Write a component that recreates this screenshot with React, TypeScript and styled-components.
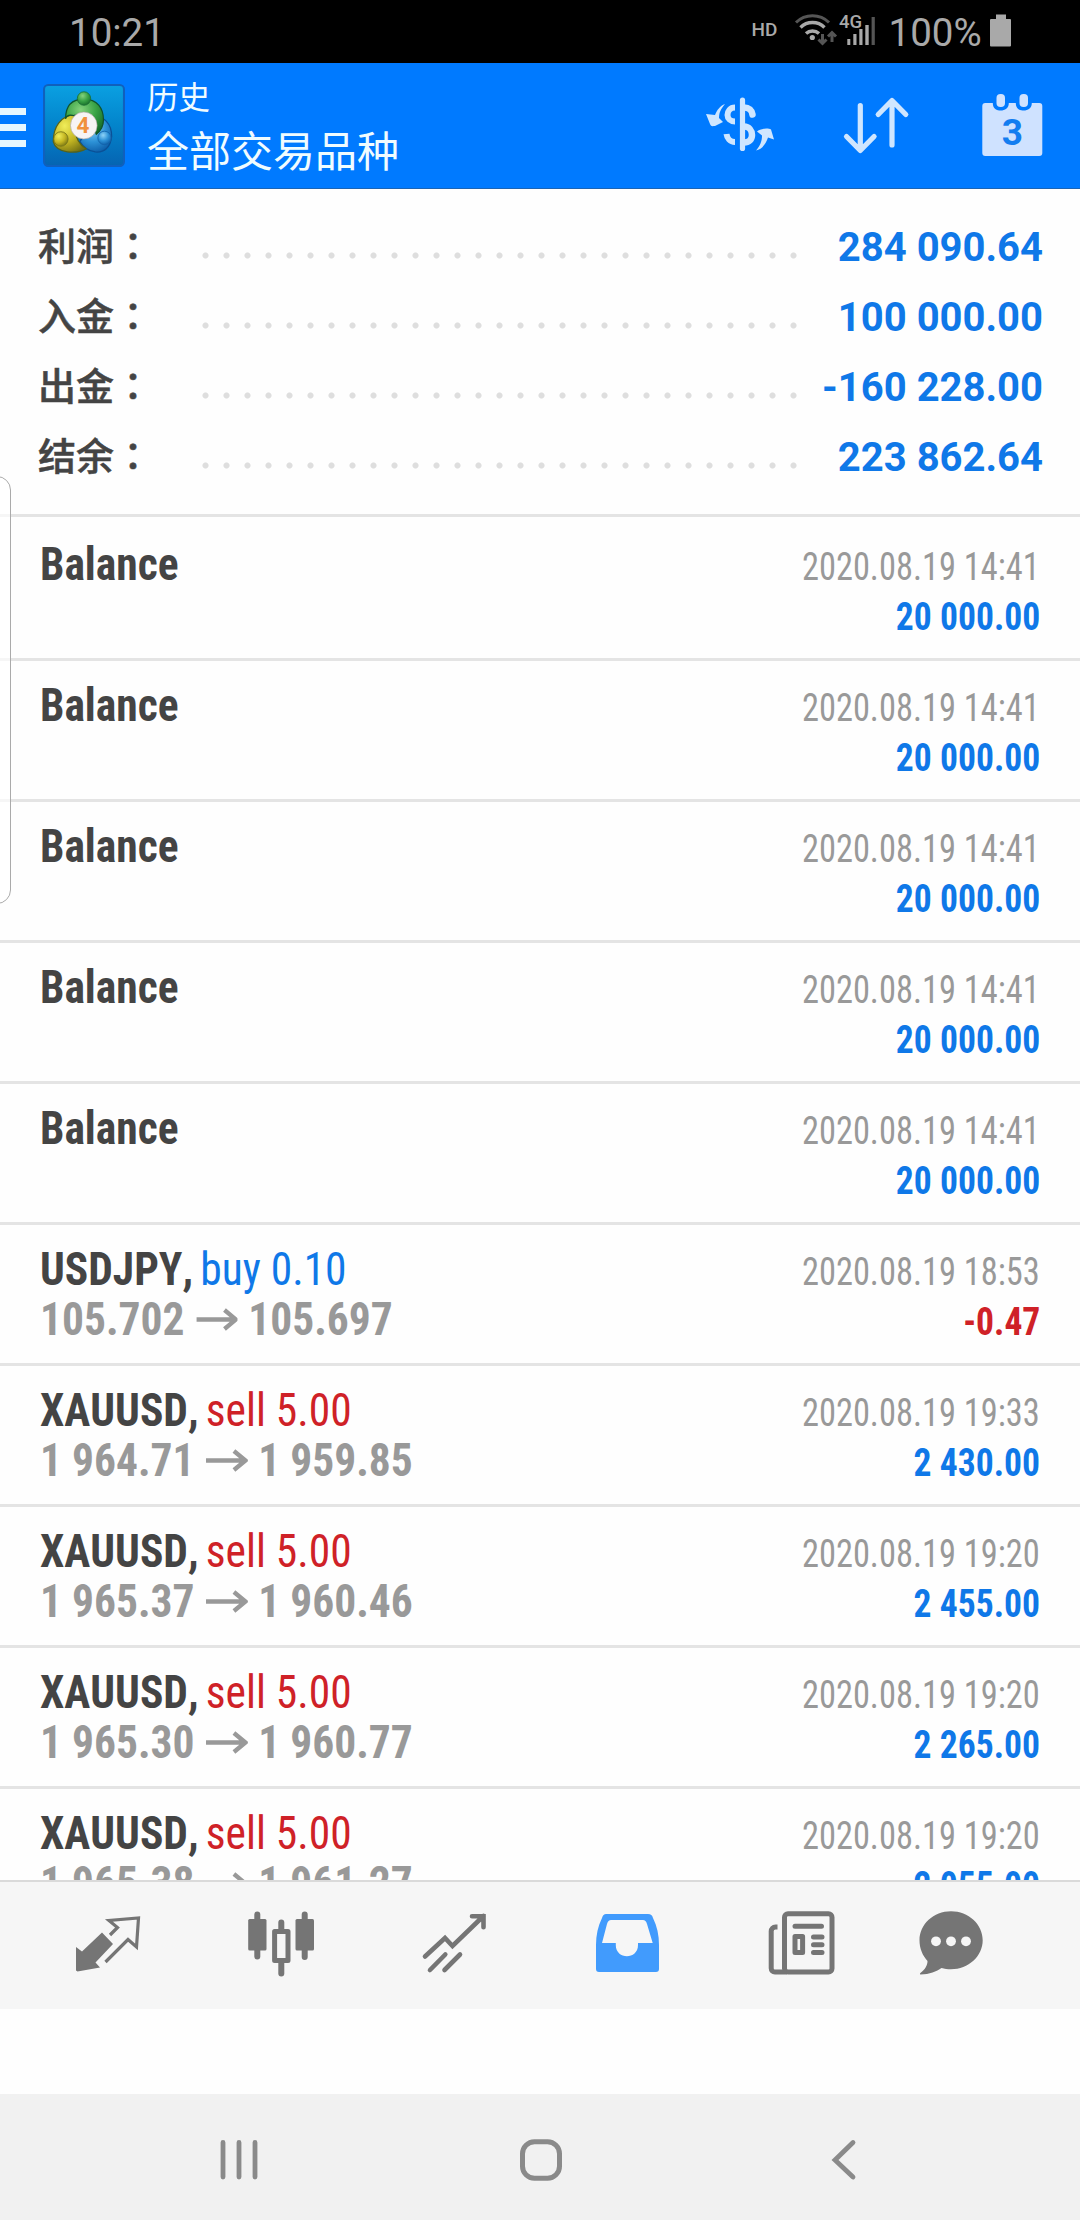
import React from "react";
import styled, { createGlobalStyle } from "styled-components";

const GlobalStyle = createGlobalStyle`
  * { box-sizing: border-box; }
  body { margin: 0; background: #fff; }
`;

const colors = {
  blue: "#0f78e8",
  red: "#cf2127",
  dark: "#444",
  gray: "#999",
  icon: "#757575",
};

const Screen = styled.div`
  position: relative;
  display: flex;
  flex-direction: column;
  width: 1080px;
  height: 2220px;
  overflow: hidden;
  background: #fefefe;
  font-family: Roboto, "Noto Sans CJK SC", sans-serif;
`;

/* ---------- status bar ---------- */

const StatusBar = styled.div`
  display: flex;
  justify-content: space-between;
  height: 63px;
  padding: 0 69px 0 69px;
  background: #000;
  color: #a9a9a9;
`;

const StatusText = styled.span<{ $width?: number }>`
  width: ${(p) => (p.$width ? `${p.$width}px` : "auto")};
  font-size: 38.5px;
  line-height: 45px;
  padding-top: 10px;
`;

const StatusRight = styled.div`
  display: flex;
`;

const HdBadge = styled.span`
  width: 42.5px;
  padding-top: 18px;
  font-size: 19px;
  font-weight: 500;
  line-height: 24px;
`;

const Network = styled.div`
  display: flex;
  position: relative;
  width: 94.5px;
`;

const NetworkLabel = styled.span`
  position: absolute;
  left: 45px;
  top: 11px;
  font-size: 18.5px;
  font-weight: 500;
  line-height: 22px;
`;

/* ---------- header ---------- */

const Header = styled.header`
  display: flex;
  height: 126px;
  background: #007aff;
  border-bottom: 1px solid #1b64b4;
  color: #f0fcff;
`;

const MenuButton = styled.div`
  display: flex;
  flex-direction: column;
  gap: 9px;
  width: 43px;
  padding-top: 45px;
`;

const MenuLine = styled.span`
  width: 26px;
  height: 7px;
  background: #e6f7ff;
`;

const LogoBox = styled.div`
  width: 104px;
  padding-top: 21px;
`;

const Titles = styled.div`
  flex: 1;
  display: flex;
  flex-direction: column;
  padding-top: 16px;
`;

const Caption = styled.span`
  font-size: 31.5px;
  line-height: 40px;
`;

const Title = styled.span`
  font-size: 42px;
  line-height: 68px;
`;

const Actions = styled.div`
  display: flex;
  padding: 27px 35px 0 0;
  gap: 67px;
`;

/* ---------- summary ---------- */

const Summary = styled.section`
  height: 328px;
  padding: 24px 37px 0 38px;
  border-bottom: 3px solid #e4e4e4;
`;

const SummaryRow = styled.div`
  display: flex;
  height: 70px;
  line-height: 70px;
`;

const SummaryLabel = styled.span`
  width: 157px;
  margin-top: -4px;
  font-family: "Noto Sans CJK SC", sans-serif;
  font-size: 38px;
  font-weight: 500;
  color: ${colors.dark};
  -webkit-text-stroke: 0.5px ${colors.dark};
`;

const LabelColon = styled.span`
  font-family: "Noto Sans CJK TC", sans-serif;
`;

const Dots = styled.span`
  width: 609px;
  height: 7px;
  margin-top: 39px;
  background: radial-gradient(circle at center, #dedede 2.6px, transparent 3.5px) 0 0 / 21px 7px repeat-x;
`;

const SummaryValue = styled.span`
  flex: 1;
  text-align: right;
  white-space: nowrap;
  font-size: 40px;
  font-weight: 700;
  color: ${colors.blue};
`;

/* ---------- deals ---------- */

const DealList = styled.section`
  height: 1363px;
  padding-top: 3px;
  overflow: hidden;
`;

const Deal = styled.article`
  display: flex;
  justify-content: space-between;
  height: 141px;
  padding: 0 40px;
  border-bottom: 3px solid #e4e4e4;
  font-stretch: 75%;
  font-kerning: none;
  font-family: "Roboto Condensed", Roboto, sans-serif;
  line-height: 50px;
  white-space: nowrap;
`;

const DealMain = styled.div`
  padding-top: 19px;
  font-size: 46px;
  transform: scaleX(0.945);
  transform-origin: left;
`;

const DealSide = styled.div`
  display: flex;
  flex-direction: column;
  align-items: flex-end;
  padding-top: 22px;
  font-size: 38px;
`;

const Line = styled.div``;

const Symbol = styled.span`
  font-weight: 700;
  color: ${colors.dark};
`;

const Side = styled.span<{ $sell?: boolean }>`
  margin-left: -3px;
  color: ${(p) => (p.$sell ? colors.red : colors.blue)};
`;

const Prices = styled.div`
  display: flex;
  align-items: center;
  gap: 11px;
  font-weight: 700;
  color: ${colors.gray};
`;

const Time = styled.span`
  color: ${colors.gray};
  transform: scaleX(0.905);
  transform-origin: right;
`;

const Profit = styled.span<{ $loss?: boolean }>`
  font-weight: 700;
  color: ${(p) => (p.$loss ? colors.red : colors.blue)};
  transform: scaleX(0.937);
  transform-origin: right;
`;

/* ---------- bottom ---------- */

const TabBar = styled.nav`
  display: flex;
  height: 129px;
  padding-left: 20px;
  background: #f6f6f6;
  border-top: 2px solid #dadada;
`;

const Tab = styled.div<{ $width: number }>`
  display: flex;
  justify-content: center;
  width: ${(p) => p.$width}px;
  padding-top: 23px;
`;

const Gap = styled.div`
  height: 85px;
`;

const SystemNav = styled.nav`
  display: flex;
  justify-content: space-around;
  height: 126px;
  padding: 36px 86px 0 88px;
  background: #f1f1f1;
`;

const EdgeHandle = styled.div`
  position: absolute;
  left: -20px;
  top: 476px;
  width: 31px;
  height: 428px;
  border: 1.5px solid #aaa;
  border-radius: 14px;
  background: rgba(255, 255, 255, 0.65);
`;

type IconProps = { box: [number, number, number, number]; children: React.ReactNode };
const Icon = ({ box, children }: IconProps) => (
  <svg width={box[2]} height={box[3]} viewBox={box.join(" ")} fill="none">
    {children}
  </svg>
);

const NetworkIcon = () => (
  <Icon box={[794, 0, 91, 63]}>
    <g strokeLinecap="butt" strokeWidth="3.4">
      <path d="M796 22.5a23.5 23.5 0 0 1 33 0" stroke="#555" strokeWidth="3" />
      <path d="M800.5 27.500a17 17 0 0 1 24 0" stroke="#a9a9a9" />
      <path d="M806 33.500a9.500 9.500 0 0 1 13 0" stroke="#a9a9a9" />
    </g>
    <circle cx="812.300" cy="37.500" r="2.600" fill="#a9a9a9" />
    <path d="M822.500 34v9M818.500 39.500l4 4 4-4M832 42v-9M828 36.500l4-4 4 4" stroke="#555" strokeWidth="3" />
    <g fill="#a9a9a9">
      <rect x="847.300" y="39" width="3" height="6" />
      <rect x="853.300" y="34" width="3.200" height="11" />
      <rect x="859.300" y="29" width="3.200" height="16" />
      <rect x="865.300" y="25" width="3.400" height="20" />
    </g>
    <rect x="871.600" y="17" width="3.200" height="28" fill="#555" />
  </Icon>
);

const BatteryIcon = () => (
  <Icon box={[990, 0, 21, 63]}>
    <path d="M996 14.500h10v4.500h4a1 1 0 0 1 1 1v25.500a1 1 0 0 1-1 1h-19a1 1 0 0 1-1-1v-25.500a1 1 0 0 1 1-1h5z" fill="#a9a9a9" />
  </Icon>
);

const Logo = () => (
  <svg width="82" height="83" viewBox="44 85.500 80 80" preserveAspectRatio="none">
    <defs>
      <linearGradient id="tile" x1="0" y1="0" x2="0" y2="1">
        <stop offset="0" stopColor="#0aa0e2" />
        <stop offset="0.5" stopColor="#0384cb" />
        <stop offset="1" stopColor="#0564b2" />
      </linearGradient>
      <radialGradient id="green" cx="0.4" cy="0.3" r="0.8">
        <stop offset="0" stopColor="#85d27c" />
        <stop offset="0.5" stopColor="#39a345" />
        <stop offset="1" stopColor="#126425" />
      </radialGradient>
      <radialGradient id="gold" cx="0.35" cy="0.3" r="0.8">
        <stop offset="0" stopColor="#f0ed59" />
        <stop offset="0.55" stopColor="#c3b522" />
        <stop offset="1" stopColor="#706e12" />
      </radialGradient>
      <radialGradient id="azure" cx="0.4" cy="0.3" r="0.8">
        <stop offset="0" stopColor="#8ed2f7" />
        <stop offset="0.5" stopColor="#2d92d7" />
        <stop offset="1" stopColor="#0754a0" />
      </radialGradient>
    </defs>
    <rect x="45" y="86.500" width="78" height="78" rx="4" fill="url(#tile)" stroke="#1060bd" strokeWidth="2" />
    <path d="M94 119c9-4 17 5 17 17-1 10-7 16-16 15-7-1-12-5-15-10z" fill="url(#azure)" stroke="#0b5096" strokeWidth="1.200" />
    <path d="M75 115c-14 1-21 12-21 26 3 12 23 12 32 7-6-4-10-10-10-17z" fill="url(#gold)" stroke="#55621b" strokeWidth="1.200" />
    <path d="M66 119c0-11 5-19 18-19s19 9 19 20c0 6-3 11-7 14l-7-19H77l-3 1c-4-1-7 0-8 3z" fill="url(#green)" stroke="#10532c" strokeWidth="1.200" />
    <circle cx="84" cy="99.500" r="6.500" fill="url(#green)" stroke="#196e34" strokeWidth="0.800" />
    <circle cx="61.500" cy="138.500" r="7" fill="url(#gold)" stroke="#75751a" strokeWidth="0.800" />
    <circle cx="104" cy="137.500" r="6.500" fill="url(#azure)" stroke="#1262aa" strokeWidth="0.800" />
    <circle cx="83.800" cy="125.500" r="13" fill="#f7f4f4" stroke="#a9a39c" strokeWidth="0.600" />
    <text x="83" y="133" textAnchor="middle" fontSize="22" fontWeight="700" fontFamily="Roboto, sans-serif" fill="#f0913c">4</text>
  </svg>
);

const CurrencyIcon = () => (
  <Icon box={[704, 90, 70, 70]}>
    <g fill="#cfe6ff">
      <path d="M725 104c-5 2-8 6-10 11l-9-1 4 10c1 3 3 2 5 2l8-4-4-4c0-6 2-9 6-14z" />
      <path d="M756 150.500c6-1 10-7 12-13l6 2-3-10c-3-2-11-1-14 2l5 4c0 6-2 10-6 15z" />
    </g>
    <g stroke="#cfe6ff">
      <path d="M742.500 100v48.500" strokeWidth="5.200" strokeLinecap="round" />
      <path d="M735 107.500c-5 0-7.500 4-7.500 7.500s3 6.500 7.500 6.500" strokeWidth="6" />
      <path d="M744 107.500c5 0 8 3 8.500 7" strokeWidth="6.500" strokeLinecap="round" />
      <path d="M744 126.500c5 0 8 4 8 8.500s-3 7.500-8 7.500" strokeWidth="6.500" />
      <path d="M726.500 134c.5 4 3.500 8 8.500 8" strokeWidth="6" />
    </g>
  </Icon>
);

const SortIcon = () => (
  <Icon box={[841, 90, 71, 70]}>
    <path d="M860.300 105.500v43.500M846.500 136.500l13.800 14 13.800-14M892 145v-43.500M878.200 114.500l13.800-14 13.800 14" stroke="#cfe6ff" strokeWidth="5.200" strokeLinecap="round" strokeLinejoin="round" />
  </Icon>
);

const CalendarIcon = () => (
  <svg width="66" height="70" viewBox="979 90 66 70">
    <path d="M985 103.500h7.500c0 6 4 7.500 8 7.500s8-2 8-7.500h7c0 6 4 7.500 8 7.500s8-2 8-7.500h7.500a3 3 0 0 1 3 3v47a3 3 0 0 1-3 3h-54a3 3 0 0 1-3-3v-47a3 3 0 0 1 3-3z" fill="#cfe2ff" transform="translate(.3 -.5)" />
    <rect x="996.500" y="94" width="8.500" height="13" rx="4" fill="#cfe2ff" />
    <rect x="1019.500" y="94" width="8.500" height="13" rx="4" fill="#cfe2ff" />
    <text x="1012.300" y="144.500" textAnchor="middle" fontSize="37" fontWeight="700" fontFamily="Roboto, sans-serif" fill="#137df0">3</text>
  </svg>
);

const ArrowIcon = () => (
  <svg width="45.500" height="27" viewBox="194 1304 43 27" preserveAspectRatio="none" fill="none">
    <path d="M195.600 1317.500h39M223.500 1308l11.500 9.500-11.500 9.500" stroke={colors.gray} strokeWidth="4.300" />
  </svg>
);

const QuotesIcon = () => (
  <Icon box={[72, 1905, 70, 75]}>
    <path d="M76 1947l6 4.500 20-19 11 11.500-17.500 18.500 4.500 5-22.500 4-1.500-1z" fill={colors.icon} />
    <path d="M110 1935l7.500-7.500-8.500-7 29.500-2.500-2 29-8.500-7.500-22.500 22.500" stroke={colors.icon} strokeWidth="3.200" />
  </Icon>
);

const ChartIcon = () => (
  <Icon box={[245, 1905, 70, 75]}>
    <path d="M256.300 1914.500v42M280.300 1922.500v9M280.300 1962v11.500M303.700 1914.500v42.500" stroke={colors.icon} strokeWidth="6" strokeLinecap="round" />
    <rect x="247.200" y="1919" width="18.300" height="31.500" rx="1.500" fill={colors.icon} />
    <rect x="294.500" y="1919" width="18.500" height="31.500" rx="1.500" fill={colors.icon} />
    <rect x="273.600" y="1931.500" width="13.400" height="29" fill="#f6f6f6" stroke={colors.icon} strokeWidth="5" strokeLinejoin="round" />
  </Icon>
);

const TradeIcon = () => (
  <Icon box={[418, 1905, 70, 75]}>
    <g stroke={colors.icon} strokeWidth="4.600" strokeLinecap="round">
      <path d="M424 1956.500l20-18.500 7.500 8 31-30M471 1916.300h11.500v11M444.300 1954.500l-15.300 15.500M459 1954.500l-15.500 15.500" />
    </g>
  </Icon>
);

const HistoryIcon = () => (
  <Icon box={[592, 1905, 70, 75]}>
    <path fillRule="evenodd" fill="#419bfd" d="M606 1914h42c3 0 4 1 5 4 4 8 6 17 6 27v24a3 3 0 0 1-3 3h-57a3 3 0 0 1-3-3v-24c0-10 2-19 6-27 1-3 2-4 4-4zM611 1920c-2 0-3 1-4 4l-5 19h13.800v2c0 15 22.200 15 22.200 0v-2h14.700l-5.700-19c-1-3-2-4-4-4z" />
  </Icon>
);

const NewsIcon = () => (
  <Icon box={[766, 1905, 70, 75]}>
    <g stroke={colors.icon} strokeWidth="5">
      <rect x="784.500" y="1913.800" width="47.500" height="58.200" rx="3.500" />
      <path d="M777.500 1927h-2a4.300 4.300 0 0 0-4.300 4.300v37a3.700 3.700 0 0 0 3.700 3.700h12" />
      <path d="M795 1926.300h26.500M813.500 1937h8.500M813.500 1944.700h8.500M813.500 1952.500h8.500" strokeLinecap="round" />
      <rect x="795" y="1936.500" width="7.600" height="16" strokeLinejoin="round" />
    </g>
  </Icon>
);

const ChatIcon = () => (
  <Icon box={[916, 1905, 70, 75]}>
    <path d="M951 1911.300c17.500 0 31.700 13 31.700 29s-14.200 29-31.700 29c-3.500 0-6.500-.5-9.500-1.300-5 3.500-12 6.500-21 6.500-1-.3-.5-1.500.5-2 4-3 6.500-7 6.500-11.500-5-5.500-8-12.500-8-20.700 0-16 14-29 31.500-29z" fill={colors.icon} />
    <g fill="#f6f6f6">
      <circle cx="936" cy="1941.300" r="4.900" />
      <circle cx="951" cy="1941.300" r="4.900" />
      <circle cx="966" cy="1941.300" r="4.900" />
    </g>
  </Icon>
);

type Trade = { symbol?: string; side?: string; open?: string; close?: string; time: string; profit: string };

const summary = [
  ["利润", "284 090.64"],
  ["入金", "100 000.00"],
  ["出金", "-160 228.00"],
  ["结余", "223 862.64"],
];

const deals: Trade[] = [
  ...Array.from({ length: 5 }, () => ({ time: "2020.08.19 14:41", profit: "20 000.00" })),
  { symbol: "USDJPY,", side: "buy 0.10", open: "105.702", close: "105.697", time: "2020.08.19 18:53", profit: "-0.47" },
  { symbol: "XAUUSD,", side: "sell 5.00", open: "1 964.71", close: "1 959.85", time: "2020.08.19 19:33", profit: "2 430.00" },
  { symbol: "XAUUSD,", side: "sell 5.00", open: "1 965.37", close: "1 960.46", time: "2020.08.19 19:20", profit: "2 455.00" },
  { symbol: "XAUUSD,", side: "sell 5.00", open: "1 965.30", close: "1 960.77", time: "2020.08.19 19:20", profit: "2 265.00" },
  { symbol: "XAUUSD,", side: "sell 5.00", open: "1 965.38", close: "1 961.27", time: "2020.08.19 19:20", profit: "2 055.00" },
];

export default function App() {
  return (
    <Screen>
      <GlobalStyle />
      <StatusBar>
        <StatusText>10:21</StatusText>
        <StatusRight>
          <HdBadge>HD</HdBadge>
          <Network>
            <NetworkIcon />
            <NetworkLabel>4G</NetworkLabel>
          </Network>
          <StatusText $width={101.5}>100%</StatusText>
          <BatteryIcon />
        </StatusRight>
      </StatusBar>

      <Header>
        <MenuButton>
          <MenuLine />
          <MenuLine />
          <MenuLine />
        </MenuButton>
        <LogoBox>
          <Logo />
        </LogoBox>
        <Titles>
          <Caption>历史</Caption>
          <Title>全部交易品种</Title>
        </Titles>
        <Actions>
          <CurrencyIcon />
          <SortIcon />
          <CalendarIcon />
        </Actions>
      </Header>

      <Summary>
        {summary.map(([label, value]) => (
          <SummaryRow key={label}>
            <SummaryLabel>
              {label}
              <LabelColon lang="zh-TW">：</LabelColon>
            </SummaryLabel>
            <Dots />
            <SummaryValue>{value}</SummaryValue>
          </SummaryRow>
        ))}
      </Summary>

      <DealList>
        {deals.map((deal, i) => (
          <Deal key={i}>
            <DealMain>
              <Line>
                <Symbol>{deal.symbol ?? "Balance"}</Symbol>
                {deal.side && <Side $sell={deal.side.startsWith("sell")}> {deal.side}</Side>}
              </Line>
              {deal.open && (
                <Prices>
                  <span>{deal.open}</span>
                  <ArrowIcon />
                  <span>{deal.close}</span>
                </Prices>
              )}
            </DealMain>
            <DealSide>
              <Time>{deal.time}</Time>
              <Profit $loss={deal.profit.startsWith("-")}>{deal.profit}</Profit>
            </DealSide>
          </Deal>
        ))}
      </DealList>

      <TabBar>
        <Tab $width={174}><QuotesIcon /></Tab>
        <Tab $width={173}><ChartIcon /></Tab>
        <Tab $width={173}><TradeIcon /></Tab>
        <Tab $width={174}><HistoryIcon /></Tab>
        <Tab $width={174}><NewsIcon /></Tab>
        <Tab $width={126}><ChatIcon /></Tab>
      </TabBar>
      <Gap />
      <SystemNav>
        <Icon box={[215, 2130, 48, 60]}>
          <path d="M223 2142.500v34.500M239 2142.500v34.500M255 2142.500v34.500" stroke="#8a8a8a" strokeWidth="4.800" strokeLinecap="round" />
        </Icon>
        <Icon box={[517, 2130, 48, 60]}>
          <rect x="522.500" y="2141.700" width="37" height="36.600" rx="12" stroke="#8a8a8a" strokeWidth="5" />
        </Icon>
        <Icon box={[819, 2130, 48, 60]}>
          <path d="M853 2142.500l-18 17.500 18 17" stroke="#8a8a8a" strokeWidth="4.800" strokeLinecap="round" strokeLinejoin="miter" />
        </Icon>
      </SystemNav>
      <EdgeHandle />
    </Screen>
  );
}
